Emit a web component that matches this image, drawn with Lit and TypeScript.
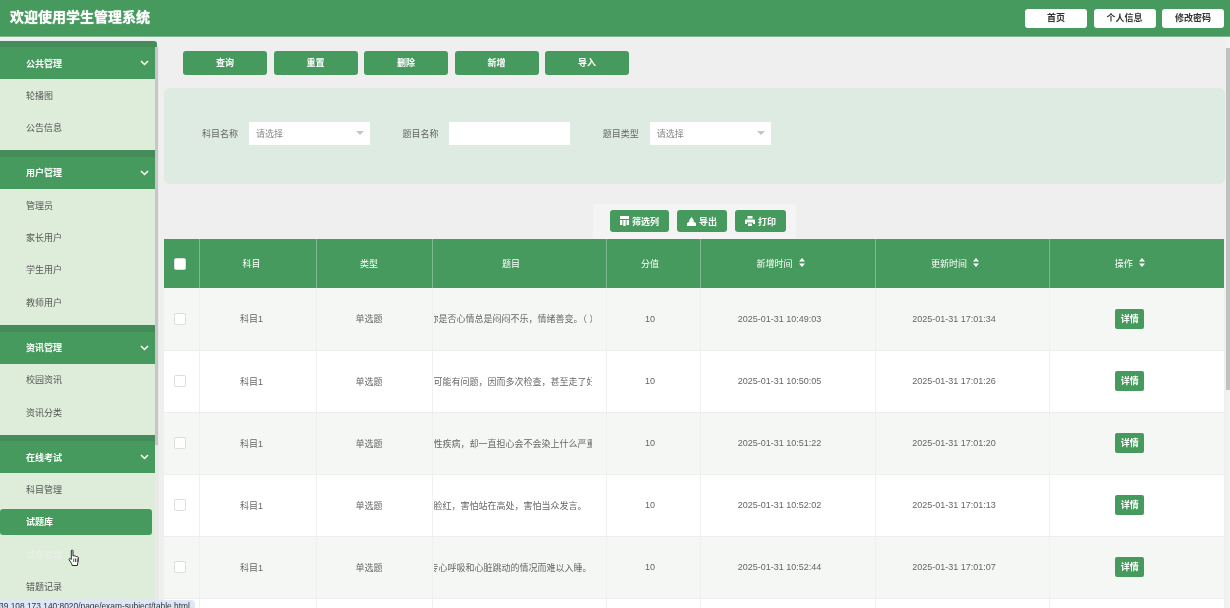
import { LitElement, html, css, svg } from "lit";
import { customElement } from "lit/decorators.js";

const menus = [
  { title: "公共管理", items: ["轮播图", "公告信息"] },
  { title: "用户管理", items: ["管理员", "家长用户", "学生用户", "教师用户"] },
  { title: "资讯管理", items: ["校园资讯", "资讯分类"] },
  { title: "在线考试", items: ["科目管理", "试题库", "试卷管理", "错题记录"] },
];

const rows = [
  { q: "你是否心情总是闷闷不乐，情绪善变。（ ）", shift: -4, add: "10:49:03", upd: "17:01:34" },
  { q: "可能有问题，因而多次检查，甚至走了好几家医院。", shift: 0, add: "10:50:05", upd: "17:01:26" },
  { q: "性疾病，却一直担心会不会染上什么严重的病。", shift: 0, add: "10:51:22", upd: "17:01:20" },
  { q: "脸红，害怕站在高处，害怕当众发言。", shift: 0, add: "10:52:02", upd: "17:01:13" },
  { q: "专心呼吸和心脏跳动的情况而难以入睡。", shift: -4, add: "10:52:44", upd: "17:01:07" },
  { q: "", shift: 0, add: "10:53:30", upd: "17:01:01" },
];

const chevron = svg`<svg class="chev" width="9" height="6" viewBox="0 0 9 6"><polyline points="1,1 4.5,4.5 8,1" fill="none" stroke="#fff" stroke-width="1.5"/></svg>`;
const sortIcon = svg`<svg class="sort" width="6" height="9" viewBox="0 0 6 9"><path d="M3 0 6 3.6H0zM3 9 0 5.4h6z" fill="#fff"/></svg>`;
const caret = svg`<svg class="caret" width="8" height="4" viewBox="0 0 8 4"><path d="M0 0h8L4 4z" fill="#c0c4cc"/></svg>`;
const columnsIcon = svg`<svg width="9" height="10" viewBox="0 0 9 10"><path d="M0 0h9v3H0zM0 4h2.4v5H0zM3.3 4h2.4v6H3.3zM6.6 4H9v5H6.6z" fill="#fff"/></svg>`;
const exportIcon = svg`<svg width="9" height="9" viewBox="0 0 9 9"><path d="M4.5 0 7 3.4 6.4 4.5 9 6v3H0V6l2.6-1.5L2 3.4z" fill="#fff"/></svg>`;
const printIcon = svg`<svg width="10" height="10" viewBox="0 0 10 10"><path d="M2.5 0h5v2.6h-5zM1.2 3.4h7.6c.7 0 1.2.5 1.2 1.2V8H8V6.4H2V8H0V4.6c0-.7.5-1.2 1.2-1.2zM3 7.4h4V10H3z" fill="#fff"/></svg>`;
const handCursor = svg`<svg width="12" height="17" viewBox="0 0 12 17"><path d="M3.5 1.2c.7-.7 1.5 0 1.5.8v5l.6-.2c.6-.2 1.3 0 1.5.4.6-.3 1.2-.1 1.5.4.7-.2 1.5.2 1.7.9.2 1.4.1 3.2-.4 4.8l-.6 3.2H4.2l-.6-2-2.4-3.6c-.5-.9.4-1.8 1.2-1.2l.9.8V2z" fill="#fff" stroke="#111" stroke-width=".9" stroke-linejoin="round"/><path d="M5.7 9.5v3.5M7.5 9.5v3.5M9.2 9.5v3.5" stroke="#111" stroke-width=".7"/></svg>`;

@customElement("app-root")
export class AppRoot extends LitElement {
  static styles = css`
    :host {
      display: block;
      position: relative;
      width: 1230px;
      height: 608px;
      overflow: hidden;
      background: #efefef;
      font-family: "Liberation Sans", "Noto Sans CJK SC", sans-serif;
      font-size: 9px;
      color: #666;
      filter: blur(0.35px);
    }
    .top {
      height: 37px;
      border-bottom: 1px solid #7fb792;
      box-sizing: border-box;
      background: #479a5e;
      display: flex;
      align-items: center;
      padding: 0 6px 0 10px;
    }
    .brand {
      flex: 1;
      padding-bottom: 5px;
      color: #fff;
      font-size: 14px;
      font-weight: bold;
      text-shadow: 0 0 1px #fff;
    }
    .top-btn {
      width: 62px;
      height: 19px;
      line-height: 19px;
      margin-left: 6.5px;
      text-align: center;
      background: #fff;
      border-radius: 3px;
      color: #333;
      font-weight: bold;
    }
    .body {
      display: flex;
      height: 571px;
    }
    .side {
      width: 155px;
      flex: none;
      margin-top: 3.5px;
    }
    .strip {
      height: 6.5px;
      background: #448c5a;
    }
    .group:first-child .strip {
      margin-right: -2px;
      border-radius: 0 3px 0 0;
    }
    .group-head {
      height: 32px;
      padding: 0 6px 0 26px;
      background: #479a5e;
      color: #fff;
      font-weight: bold;
      display: flex;
      align-items: center;
      justify-content: space-between;
    }
    .group-list {
      background: #deedda;
      padding-bottom: 6.6px;
    }
    .item {
      height: 32.4px;
      padding-left: 26px;
      display: flex;
      align-items: center;
      color: #555;
    }
    .item.active {
      height: 26px;
      margin: 3.2px 3px 3.2px 0;
      border-radius: 3px;
      background: #479a5e;
      color: #fff;
      font-weight: bold;
    }
    .item.hover {
      color: #e9f1e6;
    }
    .side-bar {
      width: 4px;
      flex: none;
      margin-top: 10px;
      background: #e9e9e9;
    }
    .side-bar div {
      width: 3px;
      height: 398px;
      background: #c6c6c6;
    }
    .main {
      flex: 1;
      min-width: 0;
      padding: 0 1px 0 5px;
    }
    .actions {
      display: flex;
      gap: 6.5px;
      margin: 14px 0 0 19px;
    }
    .act {
      width: 84px;
      height: 24px;
      line-height: 24px;
      text-align: center;
      background: #479a5e;
      border-radius: 3px;
      color: #fff;
      font-weight: bold;
    }
    .filter {
      height: 96px;
      margin-top: 13px;
      padding: 0 0 6px 38px;
      background: #ddebe2;
      border-radius: 6px;
      display: flex;
      align-items: center;
      box-sizing: border-box;
    }
    .filter label {
      width: 36px;
      margin-right: 11px;
      white-space: nowrap;
    }
    .ctl {
      width: 121px;
      height: 23px;
      margin-right: 32.4px;
      padding: 0 6px 0 7px;
      box-sizing: border-box;
      background: #fff;
      display: flex;
      align-items: center;
      justify-content: space-between;
      color: #888;
    }
    .tools-wrap {
      display: flex;
      justify-content: center;
      margin-top: 20px;
      width: 1061px;
    }
    .tools {
      height: 35px;
      box-sizing: border-box;
      padding: 6px 10px 0 17px;
      background: #f4f4f4;
      border-radius: 4px 4px 0 0;
      display: flex;
      gap: 8px;
    }
    .tool {
      height: 22px;
      padding: 0 10px;
      background: #479a5e;
      border-radius: 3px;
      color: #fff;
      font-weight: bold;
      display: flex;
      align-items: center;
      gap: 3px;
      white-space: nowrap;
    }
    table {
      width: 1060px;
      table-layout: fixed;
      border-collapse: collapse;
    }
    th {
      height: 49px;
      padding: 0;
      background: #479a5e;
      color: #fff;
      font-weight: normal;
      border-left: 1px solid #7fb792;
    }
    th:first-child,
    td:first-child {
      border-left: none;
    }
    td {
      height: 62px;
      padding: 0;
      text-align: center;
      background: #fff;
      border-left: 1px solid #f0f0f0;
      border-bottom: 1px solid #eee;
      box-sizing: border-box;
    }
    tbody tr:nth-child(odd) td {
      background: #f5f7f5;
    }
    th:nth-child(1),
    td:nth-child(1) {
      padding-right: 2px;
    }
    th:nth-child(2),
    td:nth-child(2) {
      padding-right: 12px;
    }
    th:nth-child(3),
    td:nth-child(3) {
      padding-right: 10px;
    }
    th:nth-child(4) {
      padding-right: 16px;
    }
    th:nth-child(5),
    td:nth-child(5) {
      padding-right: 6px;
    }
    td:nth-child(6),
    td:nth-child(7) {
      padding-right: 16px;
    }
    th:nth-child(6),
    th:nth-child(7) {
      padding-right: 14px;
    }
    th:nth-child(8),
    td:nth-child(8) {
      padding-right: 14px;
    }
    .sort {
      margin-left: 6px;
    }
    .check {
      display: block;
      width: 12px;
      height: 12px;
      margin: 0 auto;
      box-sizing: border-box;
      background: #fff;
      border: 1px solid #ddd;
      border-radius: 2px;
    }
    .clip {
      width: 158px;
      margin-left: 1px;
      overflow: hidden;
      white-space: nowrap;
      text-align: left;
    }
    .detail {
      display: inline-block;
      width: 29px;
      height: 20px;
      line-height: 20px;
      background: #479a5e;
      border-radius: 2px;
      color: #fff;
      font-weight: bold;
    }
    .page-bar {
      width: 4px;
      flex: none;
      background: #f1f1f1;
      padding-top: 11px;
    }
    .page-bar div {
      height: 342px;
      background: #c1c1c1;
    }
    .status {
      position: absolute;
      left: 0;
      bottom: 0;
      width: 195px;
      height: 8px;
      overflow: hidden;
      background: #dde7f8;
      border-radius: 0 4px 0 0;
      color: #333;
      font-size: 8.4px;
      line-height: 12px;
      white-space: nowrap;
      text-indent: -1px;
    }
    .cursor {
      position: absolute;
      left: 68px;
      top: 549px;
      line-height: 0;
    }
  `;

  private renderMenu() {
    return menus.map(
      (group) => html`
        <div class="group">
          <div class="strip"></div>
          <div class="group-head">${group.title}${chevron}</div>
          <div class="group-list">
            ${group.items.map((name) => {
              const state = name === "试题库" ? "active" : name === "试卷管理" ? "hover" : "";
              return html`<div class="item ${state}">${name}</div>`;
            })}
          </div>
        </div>
      `
    );
  }

  private renderTable() {
    return html`
      <table>
        <colgroup>
          <col style="width:35px" /><col style="width:117px" /><col style="width:116px" />
          <col style="width:174px" /><col style="width:94px" /><col style="width:175px" />
          <col style="width:174px" /><col style="width:175px" />
        </colgroup>
        <thead>
          <tr>
            <th><span class="check"></span></th>
            <th>科目</th>
            <th>类型</th>
            <th>题目</th>
            <th>分值</th>
            <th>新增时间${sortIcon}</th>
            <th>更新时间${sortIcon}</th>
            <th>操作${sortIcon}</th>
          </tr>
        </thead>
        <tbody>
          ${rows.map(
            (r) => html`
              <tr>
                <td><span class="check"></span></td>
                <td>科目1</td>
                <td>单选题</td>
                <td>
                  <div class="clip"><span style="margin-left:${r.shift}px">${r.q}</span></div>
                </td>
                <td>10</td>
                <td>2025-01-31 ${r.add}</td>
                <td>2025-01-31 ${r.upd}</td>
                <td><span class="detail">详情</span></td>
              </tr>
            `
          )}
        </tbody>
      </table>
    `;
  }

  render() {
    return html`
      <div class="top">
        <div class="brand">欢迎使用学生管理系统</div>
        <div class="top-btn">首页</div>
        <div class="top-btn">个人信息</div>
        <div class="top-btn">修改密码</div>
      </div>
      <div class="body">
        <aside class="side">${this.renderMenu()}</aside>
        <div class="side-bar"><div></div></div>
        <main class="main">
          <div class="actions">
            <div class="act">查询</div>
            <div class="act">重置</div>
            <div class="act">删除</div>
            <div class="act">新增</div>
            <div class="act">导入</div>
          </div>
          <div class="filter">
            <label>科目名称</label>
            <div class="ctl">请选择${caret}</div>
            <label>题目名称</label>
            <div class="ctl"></div>
            <label>题目类型</label>
            <div class="ctl">请选择${caret}</div>
          </div>
          <div class="tools-wrap">
            <div class="tools">
              <div class="tool">${columnsIcon}筛选列</div>
              <div class="tool">${exportIcon}导出</div>
              <div class="tool">${printIcon}打印</div>
            </div>
          </div>
          ${this.renderTable()}
        </main>
        <div class="page-bar"><div></div></div>
      </div>
      <div class="status">39.108.173.140:8020/page/exam-subject/table.html</div>
      <div class="cursor">${handCursor}</div>
    `;
  }
}
